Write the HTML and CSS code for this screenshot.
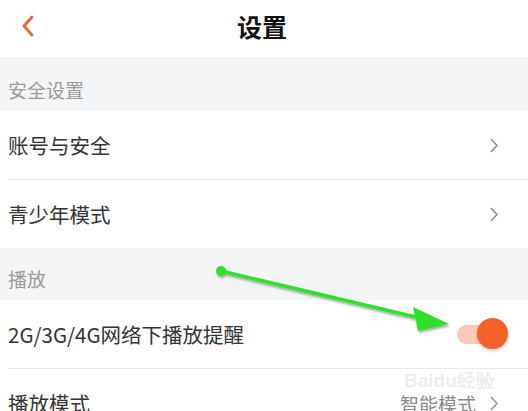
FILE: index.html
```html
<!DOCTYPE html>
<html>
<head>
    <meta charset="UTF-8">
    <meta name="viewport" content="width=device-width, initial-scale=1">
    <title>设置</title>
    <link rel="stylesheet" href="styles.css">
</head>
<body>
<div class="page">
    <div class="header">
        <svg class="back" width="14" height="22" viewBox="0 0 14 22">
            <path d="M11 2 L3 11 L11 20" fill="none" stroke="#f4612a" stroke-width="2.8" stroke-linecap="round" stroke-linejoin="round"/>
        </svg>
        <p class="main_title">设置</p>
    </div>

    <p class="section">安全设置</p>
    <div class="row">
        <span class="label">账号与安全</span>
        <svg class="chevron" width="8" height="15" viewBox="0 0 8 15"><path d="M1 1 L7 7.5 L1 14" fill="none" stroke="#8a8a8a" stroke-width="1.4"/></svg>
    </div>
    <div class="row last">
        <span class="label">青少年模式</span>
        <svg class="chevron" width="8" height="15" viewBox="0 0 8 15"><path d="M1 1 L7 7.5 L1 14" fill="none" stroke="#8a8a8a" stroke-width="1.4"/></svg>
    </div>

    <p class="section">播放</p>
    <div class="row">
        <span class="label">2G/3G/4G网络下播放提醒</span>
        <span class="switch"><span class="knob"></span></span>
    </div>
    <div class="row last">
        <span class="label">播放模式</span>
        <span class="value">智能模式<svg class="chevron" width="8" height="15" viewBox="0 0 8 15"><path d="M1 1 L7 7.5 L1 14" fill="none" stroke="#8a8a8a" stroke-width="1.4"/></svg></span>
    </div>

    <svg class="arrow" width="528" height="411" viewBox="0 0 528 411">
        <defs>
            <filter id="shadow" x="-10%" y="-10%" width="120%" height="140%">
                <feDropShadow dx="1" dy="2" stdDeviation="1.2" flood-color="#000" flood-opacity="0.35"/>
            </filter>
        </defs>
        <g filter="url(#shadow)" fill="#2ee02a" stroke="#2ee02a">
            <circle cx="221" cy="271" r="5" stroke="none"/>
            <line x1="221" y1="271" x2="420" y2="318" stroke-width="3.5"/>
            <polygon points="449,324 413,307 418,331" stroke="none"/>
        </g>
    </svg>
    <div class="watermark">Bai<span class="paw">du</span>经验</div>
</div>
</body>
</html>
```

FILE: styles.css
```css
body {
    margin: 0;
    background: #fff;
    font-family: "Noto Sans CJK SC", "Liberation Sans", sans-serif;
}
p {
    margin: 0;
}
.page {
    position: relative;
    width: 528px;
    height: 411px;
    overflow: hidden;
}
.header {
    height: 58px;
    display: flex;
    align-items: center;
    justify-content: center;
    border-bottom: 1px solid #e9e9eb;
    position: relative;
}
.back {
    position: absolute;
    left: 21px;
    top: 15px;
}
.main_title {
    font-size: 25px;
    font-weight: bold;
    color: #111;
    margin: 0 0 6px -4px;
}
.section {
    height: 52px;
    line-height: 62px;
    background: #f4f5f7;
    color: #999;
    font-size: 19px;
    padding-left: 8px;
}
.row {
    height: 68px;
    margin-left: 8px;
    padding-right: 30px;
    display: flex;
    align-items: center;
    justify-content: space-between;
    border-bottom: 1px solid #e8e8ea;
}
.row.last {
    border-bottom: none;
}
.label {
    font-size: 20.5px;
    color: #333;
}
.chevron {
    display: block;
}
.value {
    font-size: 19px;
    color: #888;
    display: flex;
    align-items: center;
    gap: 14px;
}
.switch {
    position: relative;
    width: 37px;
    height: 19px;
    border-radius: 10px;
    background: #fbcab6;
    margin-right: 4px;
}
.knob {
    position: absolute;
    right: -14px;
    top: -7px;
    width: 31px;
    height: 31px;
    border-radius: 50%;
    background: #f4602a;
    box-shadow: 0 2px 3px rgba(0, 0, 0, 0.2);
}
.arrow {
    position: absolute;
    left: 0;
    top: 0;
}
.watermark {
    position: absolute;
    left: 404px;
    top: 371px;
    color: rgba(215, 215, 215, 0.45);
    font-family: "Liberation Sans", sans-serif;
    font-size: 19px;
    line-height: 20px;
    font-weight: bold;
}
```
